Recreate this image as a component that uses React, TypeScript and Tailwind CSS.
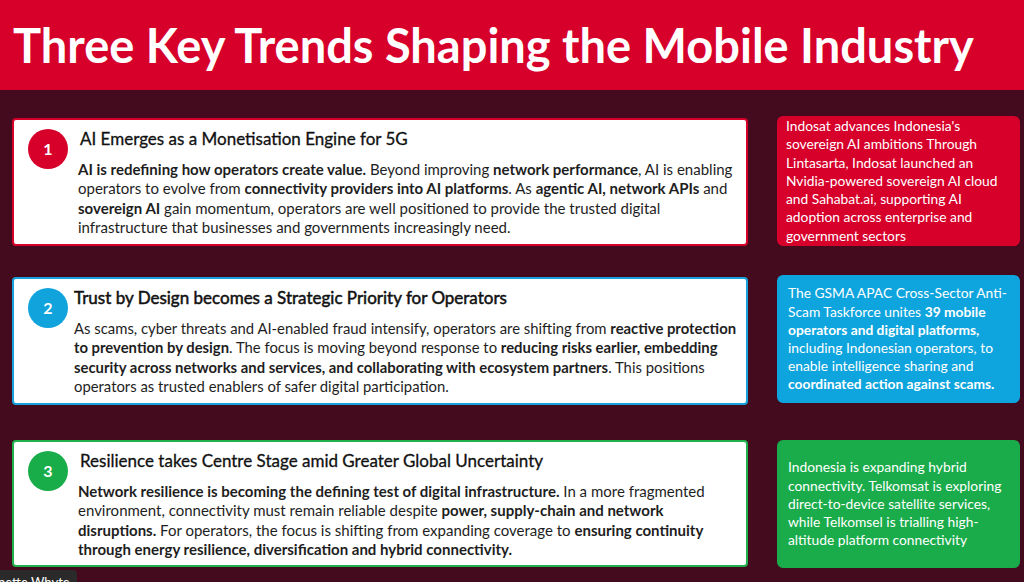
import React from "react";

const font = { fontFamily: "Lato, 'Noto Sans', sans-serif" };

type Line = React.ReactNode;

function Card({
  num,
  border,
  circle,
  title,
  lines,
  mt,
  h,
  titleX,
  bodyX,
  bodySize,
  titleStroke,
}: {
  num: string;
  border: string;
  circle: string;
  title: string;
  lines: Line[];
  mt: string;
  h: string;
  titleX: string;
  bodyX: string;
  bodySize: string;
  titleStroke: string;
}) {
  return (
    <div className={`${mt} ${h} ${border} w-[736px] shrink-0 rounded-[4px] border-2 bg-white flex pl-[14px] pt-[7px]`}>
      <div className={`${circle} mt-[2px] flex h-[40px] w-[40px] shrink-0 items-center justify-center rounded-full text-[16px] font-bold text-white`}>
        {num}
      </div>
      <div className="flex flex-col">
        <div className={`${titleX} ${titleStroke} h-[24px] whitespace-nowrap text-[17px] leading-[24px] text-[#111]`}>{title}</div>
        <div className={`${bodyX} ${bodySize} mt-[9px] flex flex-col leading-[19.4px] text-[#1e1e1e]`}>
          {lines.map((l, i) => (
            <div key={i} className="whitespace-nowrap">
              {l}
            </div>
          ))}
        </div>
      </div>
    </div>
  );
}

function Side({ bg, h, lines, pl }: { bg: string; h: string; lines: Line[]; pl: string }) {
  return (
    <div className={`${bg} ${h} ${pl} ml-[29px] flex w-[243px] shrink-0 flex-col justify-center rounded-[6px] text-[13.8px] leading-[18.2px] text-white`}>
      {lines.map((l, i) => (
        <div key={i} className="whitespace-nowrap">
          {l}
        </div>
      ))}
    </div>
  );
}

export default function App() {
  return (
    <div className="relative h-[582px] w-[1024px] overflow-hidden bg-[#430b1d]" style={font}>
      <div className="flex h-[90px] items-center bg-[#d6002b] pl-[13px] pt-[1px]">
        <h1 className="whitespace-nowrap text-[47px] font-bold leading-none text-white">
          Three Key Trends Shaping the Mobile Industry
        </h1>
      </div>

      <div className="flex flex-col pl-[12px] pt-[26px]">
        <div className="flex items-start">
          <Card
            num="1"
            border="border-[#d6002b]"
            circle="bg-[#d6002b]"
            mt="mt-[2px]"
            h="h-[128px]"
            titleX="ml-[12px]"
            bodyX="ml-[10px]"
            bodySize="text-[15px]"
            titleStroke="[-webkit-text-stroke:0.3px_#111]"
            title="AI Emerges as a Monetisation Engine for 5G"
            lines={[
              <>
                <b>AI is redefining how operators create value.</b> Beyond improving <b>network performance</b>, AI is enabling
              </>,
              <>
                operators to evolve from <b>connectivity providers into AI platforms</b>. As <b>agentic AI, network APIs</b> and
              </>,
              <>
                <b>sovereign AI</b> gain momentum, operators are well positioned to provide the trusted digital
              </>,
              <>infrastructure that businesses and governments increasingly need.</>,
            ]}
          />
          <Side
            bg="bg-[#d6002b]"
            h="h-[130px]"
            pl="pl-[9px]"
            lines={[
              "Indosat advances Indonesia's",
              "sovereign AI ambitions Through",
              "Lintasarta, Indosat launched an",
              "Nvidia-powered sovereign AI cloud",
              "and Sahabat.ai, supporting AI",
              "adoption across enterprise and",
              "government sectors",
            ]}
          />
        </div>

        <div className="mt-[29px] flex items-start">
          <Card
            num="2"
            border="border-[#16a3dc]"
            circle="bg-[#10a3dc]"
            mt="mt-[2px]"
            h="h-[128px]"
            titleX="ml-[6px]"
            bodyX="ml-[6px]"
            bodySize="text-[14.85px]"
            titleStroke="[-webkit-text-stroke:0.5px_#111]"
            title="Trust by Design becomes a Strategic Priority for Operators"
            lines={[
              <>
                As scams, cyber threats and AI-enabled fraud intensify, operators are shifting from <b>reactive protection</b>
              </>,
              <>
                <b>to prevention by design</b>. The focus is moving beyond response to <b>reducing risks earlier, embedding</b>
              </>,
              <>
                <b>security across networks and services, and collaborating with ecosystem partners</b>. This positions
              </>,
              <>operators as trusted enablers of safer digital participation.</>,
            ]}
          />
          <Side
            bg="bg-[#0ea4dd]"
            h="h-[128px]"
            pl="pl-[11px]"
            lines={[
              "The GSMA APAC Cross-Sector Anti-",
              <>
                Scam Taskforce unites <b>39 mobile</b>
              </>,
              <b>operators and digital platforms,</b>,
              "including Indonesian operators, to",
              "enable intelligence sharing and",
              <b>coordinated action against scams.</b>,
            ]}
          />
        </div>

        <div className="mt-[35px] flex items-start">
          <Card
            num="3"
            border="border-[#1fb04c]"
            circle="bg-[#19ad4a]"
            mt="mt-0"
            h="h-[127px]"
            titleX="ml-[12px]"
            bodyX="ml-[10px]"
            bodySize="text-[15px]"
            titleStroke="[-webkit-text-stroke:0.3px_#111]"
            title="Resilience takes Centre Stage amid Greater Global Uncertainty"
            lines={[
              <>
                <b>Network resilience is becoming the defining test of digital infrastructure.</b> In a more fragmented
              </>,
              <>
                environment, connectivity must remain reliable despite <b>power, supply-chain and network</b>
              </>,
              <>
                <b>disruptions.</b> For operators, the focus is shifting from expanding coverage to <b>ensuring continuity</b>
              </>,
              <b>through energy resilience, diversification and hybrid connectivity.</b>,
            ]}
          />
          <Side
            bg="bg-[#1aac4b]"
            h="h-[128px]"
            pl="pl-[11px]"
            lines={[
              "Indonesia is expanding hybrid",
              "connectivity. Telkomsat is exploring",
              "direct-to-device satellite services,",
              "while Telkomsel is trialling high-",
              "altitude platform connectivity",
            ]}
          />
        </div>
      </div>

      <div className="absolute left-0 top-[570px] h-[20px] w-[77px] overflow-hidden rounded-tr-[4px] bg-[#2a2a2a]">
        <div className="-ml-[2px] pt-[4px] whitespace-nowrap text-[13px] leading-[16px] text-white">nette Whyte</div>
      </div>
    </div>
  );
}
